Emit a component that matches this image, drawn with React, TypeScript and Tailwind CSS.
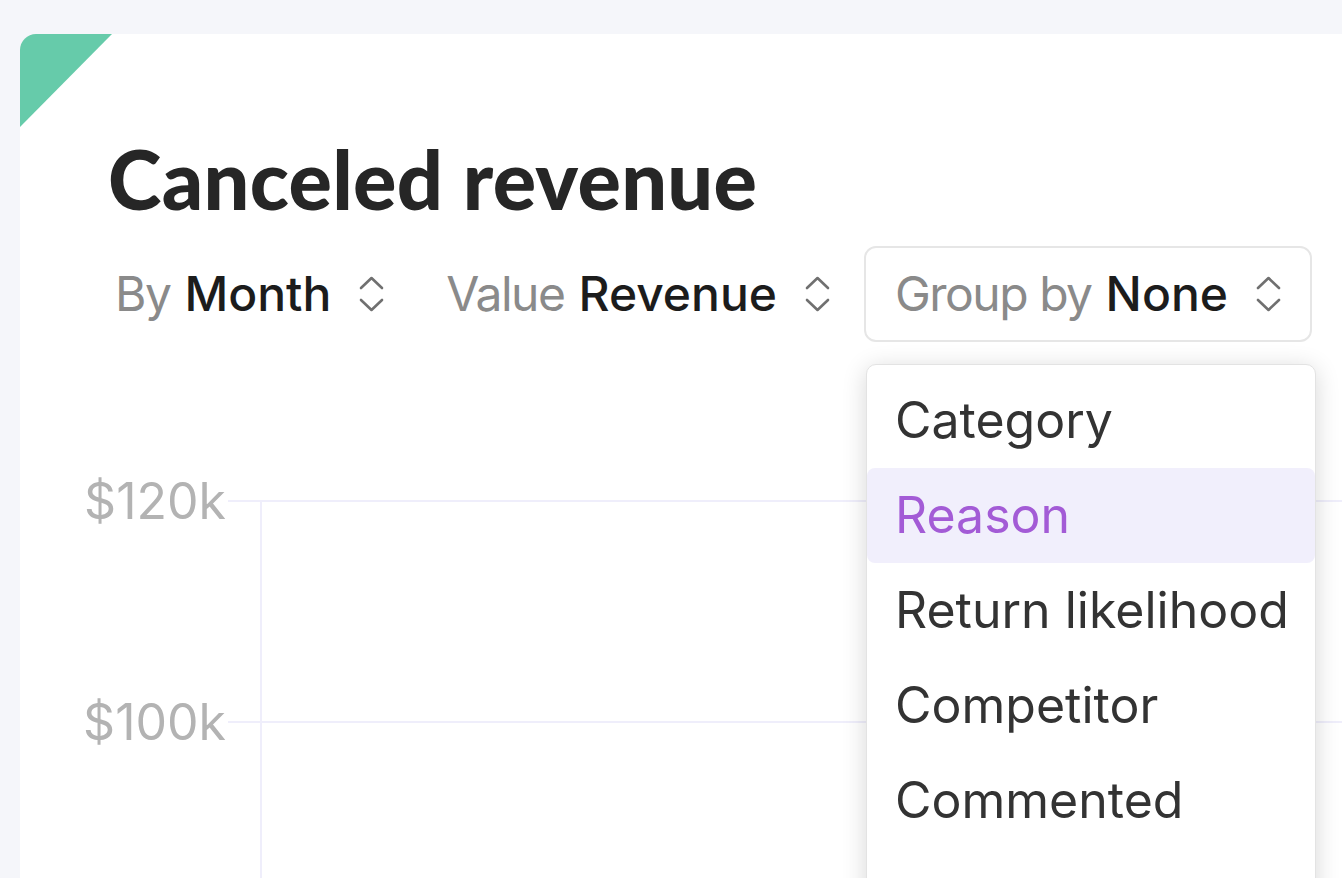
import React from 'react';

const sans = { fontFamily: 'Inter, "Noto Sans", sans-serif' };

const UpDown = () => (
  <svg width="25" height="36" viewBox="0 0 25 36" fill="none" stroke="#707070" strokeWidth="2.6" strokeLinecap="round" strokeLinejoin="round">
    <polyline points="2,12 12.5,2 23,12" />
    <polyline points="2,24 12.5,34 23,24" />
  </svg>
);

const Picker: React.FC<{ label: string; value: string; boxed?: boolean }> = ({ label, value, boxed }) => (
  <div
    className={`flex items-center h-[96px] rounded-[12px] whitespace-nowrap ${
      boxed ? 'border-2 border-[#e6e6e6] pl-[29px] pr-[29px]' : 'border-2 border-transparent px-0'
    }`}
  >
    <span className="text-[#8a8a8a] tracking-[-1.5px]">{label}</span>
    <span className="ml-[14px] text-[#1c1c1c] font-medium">{value}</span>
    <span className="ml-[28px] flex">
      <UpDown />
    </span>
  </div>
);

const options = ['Category', 'Reason', 'Return likelihood', 'Competitor', 'Commented'];

export default function App() {
  return (
    <div className="w-full h-[878px] bg-[#f5f6fa] pt-[34px] pl-[20px] overflow-hidden" style={sans}>
      <div className="relative bg-white rounded-tl-[16px] h-[900px] overflow-hidden">
        <svg className="absolute left-0 top-0" width="92" height="93" viewBox="0 0 92 93">
          <polygon points="0,0 92,0 0,93" fill="#66cbaa" />
        </svg>

        <h1
          className="pl-[88px] pt-[97px] text-[81px] leading-[96px] font-black text-[#262626] tracking-[0.3px]"
          style={{ fontFamily: 'Lato, sans-serif' }}
        >
          Canceled revenue
        </h1>

        <div className="relative z-10 flex items-center mt-[19px] pl-[93px] text-[48px]">
          <Picker label="By" value="Month" />
          <div className="ml-[58px]">
            <Picker label="Value" value="Revenue" />
          </div>
          <div className="ml-[32px] relative">
            <Picker label="Group by" value="None" boxed />
            <div className="absolute left-[2px] top-[118px] w-[450px] h-[560px] bg-white rounded-[10px] border border-[#e3e3e3] shadow-[0_4px_24px_rgba(0,0,0,0.16)] text-[50px] text-[#333333]">
              <ul className="pt-[8px]">
                {options.map((o) => (
                  <li
                    key={o}
                    className={`h-[95px] flex items-center pl-[28px] rounded-[8px] whitespace-nowrap ${
                      o === 'Reason' ? 'bg-[#f1effc] text-[#a35bd6]' : ''
                    }`}
                  >
                    {o}
                  </li>
                ))}
              </ul>
            </div>
          </div>
        </div>

        <div className="relative mt-[128px] text-[50px] text-[#b3b3b3]">
          <div className="absolute left-[240px] top-[31px] w-[2px] h-[600px] bg-[#efeefb]" />
          {['$120k', '$100k'].map((l) => (
            <div key={l} className="flex h-[221px] items-start">
              <div className="flex items-center h-[62px]">
                <span className="w-[206px] text-right leading-none">{l}</span>
                <div className="w-[1200px] h-[2px] bg-[#efeefb] ml-[2px]" />
              </div>
            </div>
          ))}
        </div>
      </div>
    </div>
  );
}
